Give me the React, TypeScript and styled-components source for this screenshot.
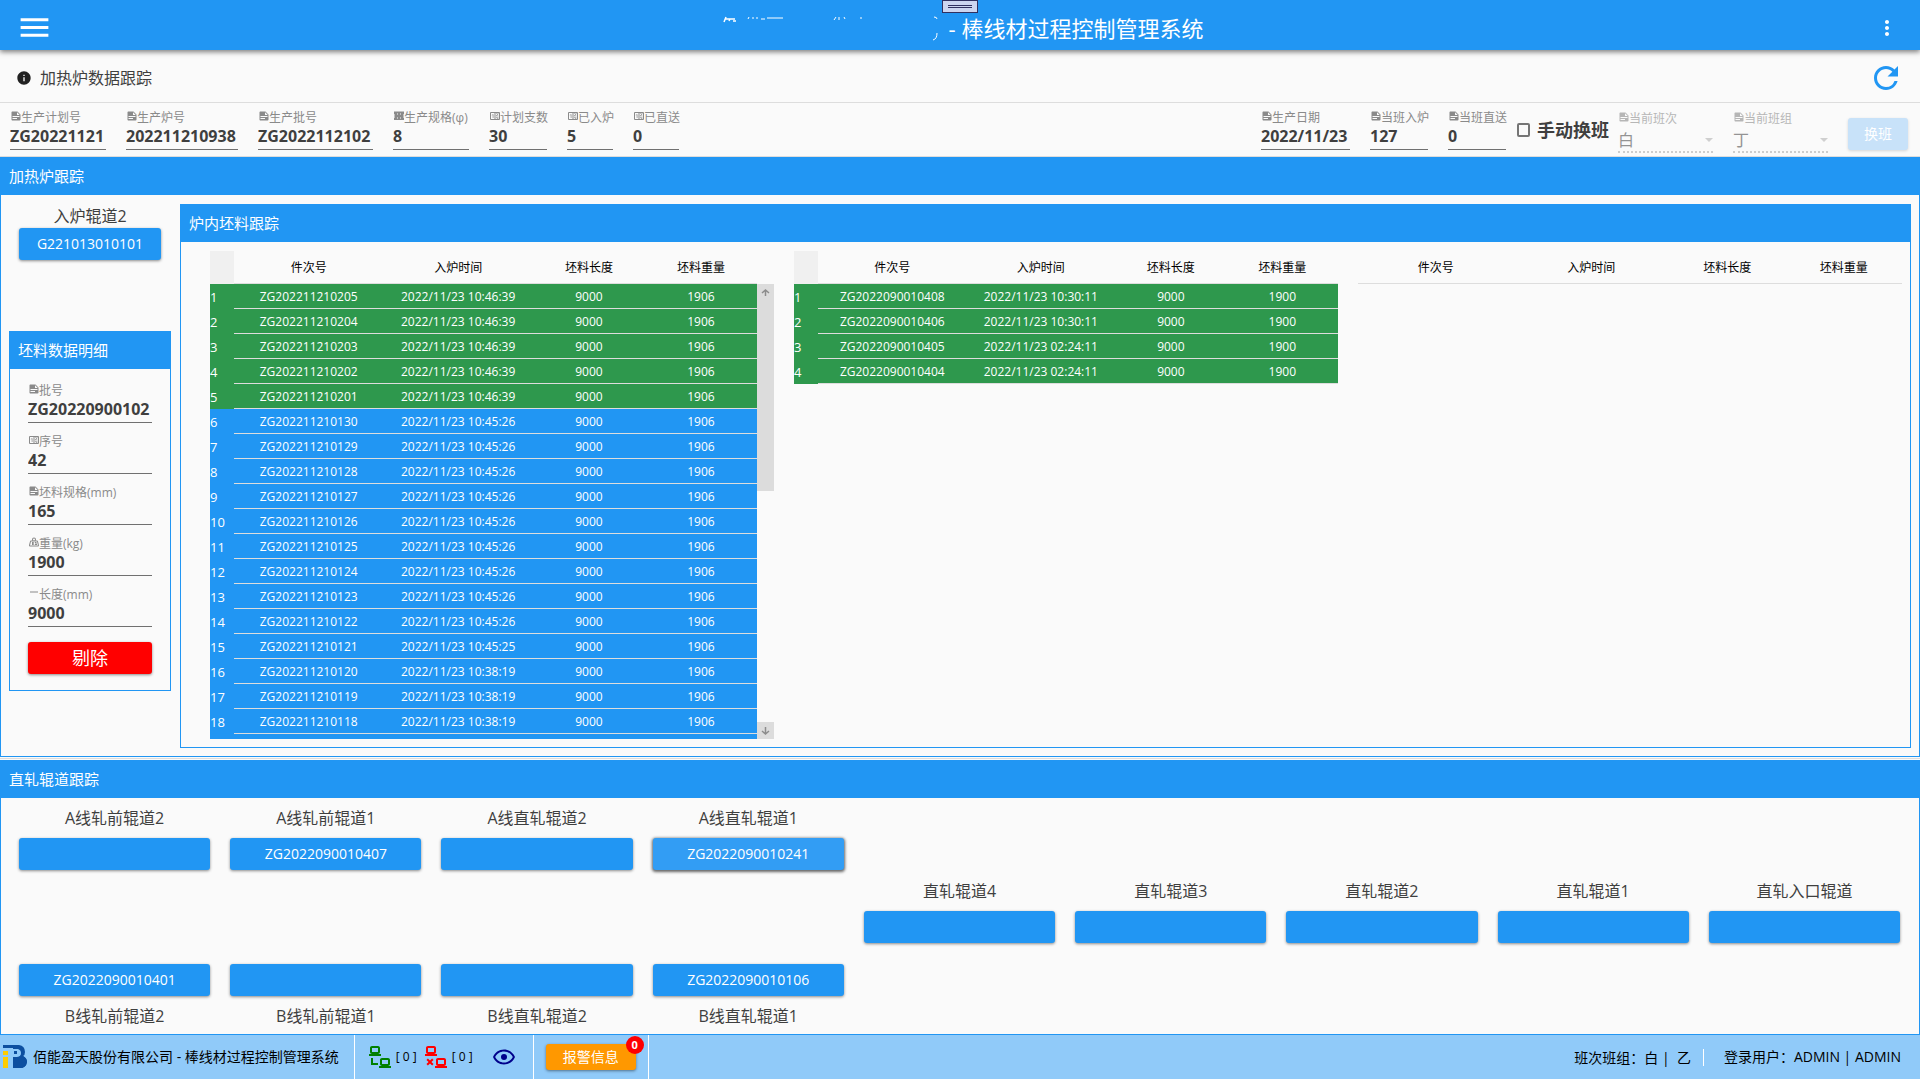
import React, { useId } from "react";
import styled, { createGlobalStyle } from "styled-components";
import { MdMenu, MdMoreVert, MdRefresh, MdInfo } from "react-icons/md";

const blue = "#2196f3";
const green = "#2e984d";
const ink = "#3f3f3f";
const paper = "#fafafa";
const divider = "#dddddd";

const GlobalStyle = createGlobalStyle`
  *, *::before, *::after { box-sizing: border-box; }
  body {
    margin: 0;
    background: ${paper};
    color: ${ink};
    font-family: "Open Sans", "Noto Sans CJK SC", sans-serif;
    font-size: 14px;
  }
  button, input, select { font: inherit; margin: 0; }
  svg { display: block; }
`;

const Page = styled.div`
  display: flex;
  flex-direction: column;
  min-height: 100vh;
`;

const TopBar = styled.header`
  position: relative;
  z-index: 1;
  display: flex;
  align-items: center;
  justify-content: space-between;
  height: 50px;
  padding: 5px 21px 0 16px;
  background: ${blue};
  color: #fff;
  box-shadow: 0 2px 5px rgba(0, 0, 0, 0.5);
`;

const IconButton = styled.button<{ $color?: string }>`
  display: flex;
  padding: 0;
  border: 0;
  background: none;
  color: ${(p) => p.$color || "#fff"};
  cursor: pointer;
`;

const AppTitle = styled.h1`
  display: flex;
  align-items: center;
  gap: 8px;
  margin: 0 4px 0 0;
  font-size: 22px;
  line-height: 32px;
  font-weight: 400;
`;

const Grip = styled.div`
  position: absolute;
  top: 0;
  left: 50%;
  width: 36px;
  height: 13px;
  transform: translateX(-50%);
  border: 1px solid #303060;
  background: #ccd5f0;
  padding: 4px 5px;

  &::before {
    content: "";
    display: block;
    height: 3px;
    border-top: 1px solid #303060;
    border-bottom: 1px solid #303060;
  }
`;

const PageHead = styled.div`
  display: flex;
  align-items: center;
  justify-content: space-between;
  height: 53px;
  padding: 3px 16px 0;
  border-bottom: 1px solid ${divider};
`;

const PageTitle = styled.h2`
  display: flex;
  align-items: center;
  gap: 8px;
  margin: 0;
  font-size: 16px;
  line-height: 24px;
  font-weight: 400;
`;

const InfoBar = styled.div`
  display: flex;
  justify-content: space-between;
  height: 54px;
  padding: 6px 12px 0 10px;
  border-bottom: 1px solid ${divider};
`;

const FieldGroup = styled.div`
  display: flex;
  align-items: flex-start;
  gap: 20px;
`;

const FieldBox = styled.div<{ $width?: number }>`
  display: flex;
  flex-direction: column;
  width: ${(p) => (p.$width ? p.$width + "px" : "100%")};
`;

const FieldLabel = styled.label`
  display: flex;
  align-items: center;
  color: #8a8a8a;
  font-size: 12px;
  line-height: 18px;
  white-space: nowrap;

  svg { flex: none; margin: 0 -1px 4px 0; }
`;

const FieldInput = styled.input`
  width: 100%;
  height: 23px;
  padding: 0 0 5px;
  border: 0;
  border-bottom: 1px solid #707070;
  background: none;
  color: ${ink};
  font-size: 16px;
  line-height: 17px;
  font-weight: 700;
  outline: none;
`;

const ShiftCheck = styled.label`
  display: flex;
  align-items: center;
  gap: 7px;
  margin: 0 -11px 0 -9px;
  padding-top: 9px;
  font-size: 18px;
  line-height: 24px;
  font-weight: 700;

  input {
    appearance: none;
    width: 13px;
    height: 14px;
    border: 2px solid #757575;
    border-radius: 2px;
  }
`;

const ComboBox = styled.div`
  width: 95px;
  padding-top: 1px;
  opacity: 0.6;
`;

const ComboValue = styled.div`
  display: flex;
  align-items: center;
  height: 25px;
  border-bottom: 2px dotted #b0b0b0;

  select {
    flex: 1;
    appearance: none;
    padding: 0;
    border: 0;
    background: none;
    color: #505050;
    font-size: 16px;
    line-height: 20px;
    opacity: 1;
  }
`;

const RaisedButton = styled.button<{ $tone?: string; $active?: boolean; $big?: boolean }>`
  width: 100%;
  height: 32px;
  padding: 0;
  border: 0;
  border-radius: 3px;
  background: ${(p) => p.$tone || (p.$active ? "#329df4" : blue)};
  color: #fff;
  font-size: ${(p) => (p.$big ? 18 : 14)}px;
  line-height: 24px;
  box-shadow: ${(p) =>
    p.$active ? "0 1px 3px 1px rgba(0, 0, 0, 0.6)" : "0 1px 3px rgba(0, 0, 0, 0.45)"};
  cursor: pointer;
`;

const ShiftButton = styled(RaisedButton)`
  width: 60px;
  margin-top: 9px;
  background: #c8e2f9;
  box-shadow: 0 1px 3px rgba(0, 0, 0, 0.15);
`;

const Panel = styled.section<{ $grow?: boolean }>`
  display: flex;
  flex-direction: column;
  flex: ${(p) => (p.$grow ? "1" : "none")};
  border: 1px solid ${blue};
  border-top: 0;
`;

const PanelTitle = styled.h3`
  margin: 0 -1px;
  height: 38px;
  padding: 0 9px;
  background: ${blue};
  color: #fff;
  font-size: 15px;
  line-height: 38px;
  font-weight: 400;
`;

const Separator = styled.hr`
  width: 100%;
  height: 1px;
  margin: 1px 0;
  border: 0;
  background: ${divider};
`;

const FurnaceBody = styled.div`
  display: flex;
  gap: 9px;
  padding: 9px 8px 8px;
`;

const SideColumn = styled.div`
  flex: none;
  width: 162px;
`;

const Station = styled.div`
  display: flex;
  flex-direction: column;
  padding: 0 10px;
  margin-bottom: 71px;
`;

const StationLabel = styled.span`
  font-size: 16px;
  line-height: 24px;
  text-align: center;
  white-space: nowrap;
`;

const DetailForm = styled.form`
  display: flex;
  flex-direction: column;
  gap: 10px;
  padding: 13px 18px 16px;
`;

const DetailAction = styled.div`
  padding-top: 5px;
`;

const FurnacePanel = styled(Panel)`
  flex: 1;
  min-width: 0;
`;

const TableArea = styled.div`
  display: grid;
  grid-template-columns: 564fr 544fr 544fr;
  gap: 20px;
  padding: 9px 8px 8px 29px;
`;

const TableFrame = styled.div`
  display: flex;
  min-width: 0;
`;

const BilletTable = styled.table`
  display: block;
  flex: 1;
  min-width: 0;
  color: #000;
  font-size: 12px;

  thead, tbody { display: block; }
  th, td { padding: 0; font-weight: 400; text-align: center; white-space: nowrap; }
`;

const ScrollBody = styled.tbody<{ $full?: boolean }>`
  height: ${(p) => (p.$full ? "455px" : "auto")};
  overflow: hidden;
  background: ${(p) => (p.$full ? blue : "none")};
`;

const Row = styled.tr<{ $tone?: string; $numbered?: boolean }>`
  display: grid;
  grid-template-columns: ${(p) => (p.$numbered ? "24px " : "")}4fr 4fr 3fr 3fr;
  background: ${(p) => p.$tone || "none"};
  color: ${(p) => (p.$tone ? "#fff" : "#000")};
`;

const HeadCell = styled.th`
  height: 33px;
  border-bottom: 1px solid ${divider};
  line-height: 33px;
`;

const CornerCell = styled.td`
  height: 33px;
  background: #f0f0f0;
`;

const Cell = styled.td`
  height: 25px;
  border-bottom: 1px solid ${divider};
  line-height: 25px;
`;

const NumberCell = styled.th`
  && { text-align: left; }
  font-size: 13px;
  line-height: 26px;
  height: 25px;
`;

const ScrollRail = styled.div`
  display: flex;
  flex-direction: column;
  justify-content: space-between;
  width: 17px;
  margin-top: 33px;
`;

const ScrollThumb = styled.div<{ $height: number }>`
  display: flex;
  justify-content: center;
  height: ${(p) => p.$height}px;
  padding-top: 5px;
  background: #dcdcdc;
`;

const LineGrid = styled.div`
  display: grid;
  grid-template-columns: repeat(9, minmax(0, 1fr));
  grid-template-rows: 1fr;
  gap: 20px;
  flex: 1;
  min-height: 236px;
  padding: 8px 19px 6px 18px;
`;

const LinePair = styled.div`
  display: flex;
  flex-direction: column;
  justify-content: space-between;
`;

const LineStation = styled.div<{ $middle?: boolean }>`
  display: flex;
  flex-direction: column;
  align-self: ${(p) => (p.$middle ? "center" : "auto")};
  padding-bottom: ${(p) => (p.$middle ? "12px" : "0")};
  gap: 8px;
`;

const StatusBar = styled.footer`
  display: flex;
  align-items: stretch;
  height: 44px;
  background: #90caf9;
  color: #000;
  font-size: 14px;
  line-height: 20px;
  white-space: nowrap;
`;

const StatusItem = styled.div<{ $pad: string; $gap?: number }>`
  display: flex;
  align-items: center;
  gap: ${(p) => p.$gap || 0}px;
  padding: ${(p) => p.$pad};
  border-right: 1px solid #fff;
`;

const CountLabel = styled.span`
  margin: 0 7px 0 4px;
  font-size: 12px;
`;

const EyeBox = styled.span`
  margin-left: 12px;
`;

const AlarmBox = styled.div`
  position: relative;
  width: 90px;
`;

const AlarmButton = styled(RaisedButton)`
  height: 26px;
`;

const Badge = styled.span`
  position: absolute;
  top: -8px;
  right: -8px;
  width: 18px;
  height: 18px;
  border-radius: 50%;
  background: #f00;
  color: #fff;
  font-size: 11px;
  line-height: 18px;
  font-weight: 700;
  text-align: center;
`;

const UserInfo = styled.div`
  display: flex;
  align-items: center;
  margin-left: auto;
  padding-right: 19px;
`;

const ShiftInfo = styled.span`
  padding-right: 12px;
  margin-right: 20px;
  border-right: 1px solid #fff;
  line-height: 17px;
`;

const iconPaths: Record<string, string> = {
  note: "M14,10H19.5L14,4.5V10M5,3H15L21,9V19A2,2 0 0,1 19,21H5C3.89,21 3,20.1 3,19V5C3,3.89 3.89,3 5,3M5,12V14H19V12H5M5,16V18H14V16H5Z",
  counter:
    "M4,4H20A2,2 0 0,1 22,6V18A2,2 0 0,1 20,20H4A2,2 0 0,1 2,18V6A2,2 0 0,1 4,4M4,6V18H11V6H4M20,18V6H18.76C19,6.54 18.95,7.07 18.95,7.13C18.88,7.8 18.41,8.5 18.24,8.75L15.91,11.3L19.23,11.28L19.24,12.5L14.04,12.47L14,11.47C14,11.47 17.05,8.24 17.2,7.95C17.34,7.67 17.91,6 16.5,6C15.27,6.05 15.41,7.3 15.41,7.3L13.87,7.31C13.87,7.31 13.88,6.65 14.25,6H13V18H15.58L15.57,17.14L16.54,17.13C16.54,17.13 17.45,16.97 17.46,16.08C17.5,15.08 16.65,15.08 16.5,15.08C16.37,15.08 15.43,15.13 15.43,15.95H13.91C13.91,15.95 13.95,13.89 16.5,13.89C19.1,13.89 18.96,15.91 18.96,15.91C18.96,15.91 19,17.16 17.85,17.63L18.37,18H20M8.92,16H7.42V10.2L5.62,10.76V9.53L8.76,8.41H8.92V16Z",
  size: "M2,3H22V9H20V11H22V13H20V15H22V20H2V15H4V13H2V11H4V9H2V3M8,7V9H10V7H8M14,7V9H16V7H14M8,15V17H10V15H8M14,15V17H16V15H14Z",
  weight:
    "M12,3A4,4 0 0,1 16,7C16,7.73 15.81,8.41 15.46,9H18C18.95,9 19.75,9.67 19.95,10.56C21.96,18.57 22,18.78 22,19A2,2 0 0,1 20,21H4A2,2 0 0,1 2,19C2,18.78 2.04,18.57 4.05,10.56C4.25,9.67 5.05,9 6,9H8.54C8.19,8.41 8,7.73 8,7A4,4 0 0,1 12,3M12,5A2,2 0 0,0 10,7A2,2 0 0,0 12,9A2,2 0 0,0 14,7A2,2 0 0,0 12,5M6,11L4,19H20L18,11H6M8,12H10V14L11,12H13L11,15L13,18H11L10,16V18H8V12M14,12H17V14H15V16H16V15H18V18H14V12Z",
  minus: "M4,9H20V11H4V9Z",
  connected:
    "M4,1C2.89,1 2,1.89 2,3V7C2,8.11 2.89,9 4,9H1V11H13V9H10C11.11,9 12,8.11 12,7V3C12,1.89 11.11,1 10,1H4M4,3H10V7H4V3M3,13V20H10V18H5V13H3M14,13C12.89,13 12,13.89 12,15V19C12,20.11 12.89,21 14,21H11V23H23V21H20C21.11,21 22,20.11 22,19V15C22,13.89 21.11,13 20,13H14M14,15H20V19H14V15Z",
  disconnected:
    "M4,1C2.89,1 2,1.89 2,3V7C2,8.11 2.89,9 4,9H1V11H13V9H10C11.11,9 12,8.11 12,7V3C12,1.89 11.11,1 10,1H4M4,3H10V7H4V3M3.88,13.46L2.46,14.88L4.59,17L2.46,19.12L3.88,20.54L6,18.41L8.12,20.54L9.54,19.12L7.41,17L9.54,14.88L8.12,13.46L6,15.59L3.88,13.46M14,13C12.89,13 12,13.89 12,15V19C12,20.11 12.89,21 14,21H11V23H23V21H20C21.11,21 22,20.11 22,19V15C22,13.89 21.11,13 20,13H14M14,15H20V19H14V15Z",
  eye: "M12,9A3,3 0 0,1 15,12A3,3 0 0,1 12,15A3,3 0 0,1 9,12A3,3 0 0,1 12,9M12,4.5C17,4.5 21.27,7.61 23,12C21.27,16.39 17,19.5 12,19.5C7,19.5 2.73,16.39 1,12C2.73,7.61 7,4.5 12,4.5M3.18,12C4.83,15.36 8.24,17.5 12,17.5C15.76,17.5 19.17,15.36 20.82,12C19.17,8.64 15.76,6.5 12,6.5C8.24,6.5 4.83,8.64 3.18,12Z",
};

function Glyph({ name, size = 12, color = "currentColor" }: { name: string; size?: number; color?: string }) {
  return (
    <svg width={size} height={size} viewBox="0 0 24 24" fill={color} aria-hidden="true">
      <path d={iconPaths[name]} />
    </svg>
  );
}

function Field({ icon, label, value, width }: { icon: string; label: string; value: string; width?: number }) {
  const id = useId();
  return (
    <FieldBox $width={width}>
      <FieldLabel htmlFor={id}>
        <Glyph name={icon} />
        {label}
      </FieldLabel>
      <FieldInput id={id} value={value} readOnly />
    </FieldBox>
  );
}

function Combo({ label, value }: { label: string; value: string }) {
  const id = useId();
  return (
    <ComboBox>
      <FieldLabel htmlFor={id}>
        <Glyph name="note" />
        {label}
      </FieldLabel>
      <ComboValue>
        <select id={id} disabled defaultValue={value}>
          <option>{value}</option>
        </select>
        <svg width="8" height="4" viewBox="0 0 8 4" fill="#b4b4b4">
          <path d="M0 0H8L4 4Z" />
        </svg>
      </ComboValue>
    </ComboBox>
  );
}

type Billet = { id: string; time: string; length: number; weight: number; tone: string };

function billets(prefix: string, rows: [string, string][], weight: number, hot: number): Billet[] {
  return rows.map(([no, time], i) => ({
    id: prefix + no,
    time: "2022/11/23 " + time,
    length: 9000,
    weight,
    tone: i < hot ? green : blue,
  }));
}

const firstRow = billets(
  "ZG202211210",
  [
    ["205", "10:46:39"], ["204", "10:46:39"], ["203", "10:46:39"], ["202", "10:46:39"], ["201", "10:46:39"],
    ["130", "10:45:26"], ["129", "10:45:26"], ["128", "10:45:26"], ["127", "10:45:26"], ["126", "10:45:26"],
    ["125", "10:45:26"], ["124", "10:45:26"], ["123", "10:45:26"], ["122", "10:45:26"], ["121", "10:45:25"],
    ["120", "10:38:19"], ["119", "10:38:19"], ["118", "10:38:19"],
  ],
  1906,
  5
);

const secondRow = billets(
  "ZG2022090010",
  [["408", "10:30:11"], ["406", "10:30:11"], ["405", "02:24:11"], ["404", "02:24:11"]],
  1900,
  4
);

function Billets({ data, scroll }: { data: Billet[]; scroll?: boolean }) {
  const numbered = data.length > 0;
  return (
    <TableFrame>
      <BilletTable>
        <thead>
          <Row $numbered={numbered}>
            {numbered && <CornerCell />}
            <HeadCell scope="col">件次号</HeadCell>
            <HeadCell scope="col">入炉时间</HeadCell>
            <HeadCell scope="col">坯料长度</HeadCell>
            <HeadCell scope="col">坯料重量</HeadCell>
          </Row>
        </thead>
        <ScrollBody $full={scroll}>
          {data.map((b, i) => (
            <Row key={b.id} $tone={b.tone} $numbered>
              <NumberCell scope="row">{i + 1}</NumberCell>
              <Cell>{b.id}</Cell>
              <Cell>{b.time}</Cell>
              <Cell>{b.length}</Cell>
              <Cell>{b.weight}</Cell>
            </Row>
          ))}
        </ScrollBody>
      </BilletTable>
      {scroll && (
        <ScrollRail aria-hidden="true">
          <ScrollThumb $height={207}>
            <svg width="9" height="8" viewBox="0 0 9 8" fill="none" stroke="#8c8c8c" strokeWidth="1.500">
              <path d="M1 4L4.500 1L8 4M4.500 1V7" />
            </svg>
          </ScrollThumb>
          <ScrollThumb $height={17}>
            <svg width="9" height="8" viewBox="0 0 9 8" fill="none" stroke="#8c8c8c" strokeWidth="1.500">
              <path d="M1 4L4.500 7L8 4M4.500 0V7" />
            </svg>
          </ScrollThumb>
        </ScrollRail>
      )}
    </TableFrame>
  );
}

const linePairs = [
  { a: ["A线轧前辊道2", ""], b: ["B线轧前辊道2", "ZG2022090010401"] },
  { a: ["A线轧前辊道1", "ZG2022090010407"], b: ["B线轧前辊道1", ""] },
  { a: ["A线直轧辊道2", ""], b: ["B线直轧辊道2", ""] },
  { a: ["A线直轧辊道1", "ZG2022090010241"], b: ["B线直轧辊道1", "ZG2022090010106"], active: true },
];

const middleStations = ["直轧辊道4", "直轧辊道3", "直轧辊道2", "直轧辊道1", "直轧入口辊道"];

export default function App() {
  return (
    <Page>
      <GlobalStyle />
      <TopBar>
        <IconButton aria-label="菜单">
          <MdMenu size={37} />
        </IconButton>
        <AppTitle>
          <svg width="220" height="28" viewBox="0 0 220 28" fill="none" stroke="#fff" strokeWidth="1">
            <path d="M5 3L3 8M4 5H14M9 5L8 7M12 7H15" strokeWidth="1.500" />
            <path d="M28 3L27 5M32 3V5M36 3V5M40 5H44M46 4H62M115 3L113 6M118 3V6M123 3L124 5M140 3V5M213 3Q216 3 216 5M216 19Q216 25 212 26" />
          </svg>
          - 棒线材过程控制管理系统
        </AppTitle>
        <IconButton aria-label="更多">
          <MdMoreVert size={24} />
        </IconButton>
        <Grip />
      </TopBar>

      <PageHead>
        <PageTitle>
          <MdInfo size={16} color="#212121" />
          加热炉数据跟踪
        </PageTitle>
        <IconButton $color={blue} aria-label="刷新">
          <MdRefresh size={36} />
        </IconButton>
      </PageHead>

      <InfoBar>
        <FieldGroup>
          <Field icon="note" label="生产计划号" value="ZG20221121" width={96} />
          <Field icon="note" label="生产炉号" value="202211210938" width={112} />
          <Field icon="note" label="生产批号" value="ZG2022112102" width={115} />
          <Field icon="size" label="生产规格(φ)" value="8" width={76} />
          <Field icon="counter" label="计划支数" value="30" width={58} />
          <Field icon="counter" label="已入炉" value="5" width={46} />
          <Field icon="counter" label="已直送" value="0" width={46} />
        </FieldGroup>
        <FieldGroup>
          <Field icon="note" label="生产日期" value="2022/11/23" width={89} />
          <Field icon="note" label="当班入炉" value="127" width={58} />
          <Field icon="note" label="当班直送" value="0" width={58} />
          <ShiftCheck>
            <input type="checkbox" />
            手动换班
          </ShiftCheck>
          <Combo label="当前班次" value="白" />
          <Combo label="当前班组" value="丁" />
          <ShiftButton disabled>换班</ShiftButton>
        </FieldGroup>
      </InfoBar>

      <Panel>
        <PanelTitle>加热炉跟踪</PanelTitle>
        <FurnaceBody>
          <SideColumn>
            <Station>
              <StationLabel>入炉辊道2</StationLabel>
              <RaisedButton>G221013010101</RaisedButton>
            </Station>
            <Panel>
              <PanelTitle>坯料数据明细</PanelTitle>
              <DetailForm onSubmit={(e) => e.preventDefault()}>
                <Field icon="note" label="批号" value="ZG20220900102" />
                <Field icon="counter" label="序号" value="42" />
                <Field icon="note" label="坯料规格(mm)" value="165" />
                <Field icon="weight" label="重量(kg)" value="1900" />
                <Field icon="minus" label="长度(mm)" value="9000" />
                <DetailAction>
                  <RaisedButton $tone="#ff0000" $big>
                    剔除
                  </RaisedButton>
                </DetailAction>
              </DetailForm>
            </Panel>
          </SideColumn>
          <FurnacePanel>
            <PanelTitle>炉内坯料跟踪</PanelTitle>
            <TableArea>
              <Billets data={firstRow} scroll />
              <Billets data={secondRow} />
              <Billets data={[]} />
            </TableArea>
          </FurnacePanel>
        </FurnaceBody>
      </Panel>

      <Separator />

      <Panel $grow>
        <PanelTitle>直轧辊道跟踪</PanelTitle>
        <LineGrid>
          {linePairs.map((p) => (
            <LinePair key={p.a[0]}>
              <LineStation>
                <StationLabel>{p.a[0]}</StationLabel>
                <RaisedButton $active={p.active} aria-label={p.a[0]}>{p.a[1]}</RaisedButton>
              </LineStation>
              <LineStation>
                <RaisedButton aria-label={p.b[0]}>{p.b[1]}</RaisedButton>
                <StationLabel>{p.b[0]}</StationLabel>
              </LineStation>
            </LinePair>
          ))}
          {middleStations.map((name) => (
            <LineStation key={name} $middle>
              <StationLabel>{name}</StationLabel>
              <RaisedButton aria-label={name} />
            </LineStation>
          ))}
        </LineGrid>
      </Panel>

      <StatusBar>
        <StatusItem $pad="0 15px 0 3px" $gap={6}>
          <svg width="24" height="24" viewBox="0 0 24 24">
            <path d="M0 0H16Q22 1 22 7Q22 10 20 11Q24 13 24 17Q23 23 17 23H10V12H14V7H10V3H0Z" fill="#0d4fa0" />
            <path d="M8 4H15Q18 5 18 8Q18 12 14 12H12V23H9V6Z" fill="#90caf9" />
            <path d="M10 12H14Q19 12 19 6Q21 9 20 11Q24 13 24 17Q23 23 17 23H10Z" fill="#0d4fa0" />
            <path d="M11 6H14V9H11Z" fill="#0d4fa0" />
            <path d="M0 6H5V10H0ZM0 12H5V23H0Z" fill="#ffcc00" />
          </svg>
          佰能盈天股份有限公司 - 棒线材过程控制管理系统
        </StatusItem>
        <StatusItem $pad="0 17px 0 13px">
          <Glyph name="connected" size={24} color="#008000" />
          <CountLabel>[ 0 ]</CountLabel>
          <Glyph name="disconnected" size={24} color="#ff0000" />
          <CountLabel>[ 0 ]</CountLabel>
          <EyeBox>
            <Glyph name="eye" size={24} color="#00008b" />
          </EyeBox>
        </StatusItem>
        <StatusItem $pad="0 12px">
          <AlarmBox>
            <AlarmButton $tone="#ff9800">报警信息</AlarmButton>
            <Badge>0</Badge>
          </AlarmBox>
        </StatusItem>
        <UserInfo>
          <ShiftInfo>班次班组：白 |&nbsp; 乙</ShiftInfo>
          <span>登录用户：ADMIN | ADMIN</span>
        </UserInfo>
      </StatusBar>
    </Page>
  );
}
